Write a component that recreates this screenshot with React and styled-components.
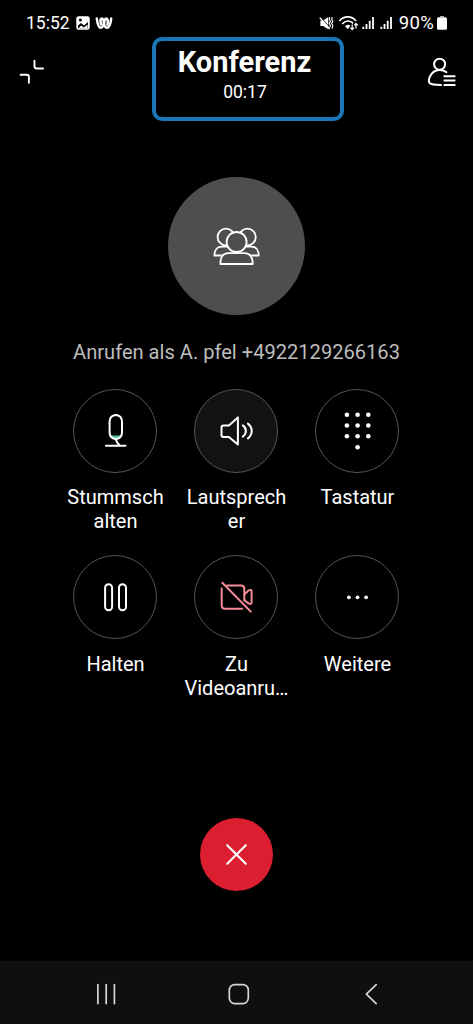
import React from 'react';
import styled, { createGlobalStyle } from 'styled-components';

const colors = {
  black: '#000000',
  white: '#ffffff',
  navBar: '#0f0f0f',
  navIcon: '#d6d6d6',
  avatar: '#4e4e4e',
  ring: '#555555',
  active: '#121212',
  caption: '#bdbdbd',
  frame: '#1b75b9',
  danger: '#dc1f30',
  disabled: '#f58c98',
  level: '#4fc3a5',
};

const actions = [
  { id: 'mute', label: 'Stummsch\nalten', icon: <MicIcon /> },
  { id: 'speaker', label: 'Lautsprech\ner', icon: <SpeakerIcon />, active: true },
  { id: 'keypad', label: 'Tastatur', icon: <KeypadIcon /> },
  { id: 'hold', label: 'Halten', icon: <PauseIcon /> },
  { id: 'video', label: 'Zu\nVideoanru…', icon: <VideoOffIcon /> },
  { id: 'more', label: 'Weitere', icon: <MoreIcon /> },
];

export default function App() {
  return (
    <>
      <GlobalStyle />
      <Screen>
        <StatusBar>
          <StatusGroup>
            <StatusText>15:52</StatusText>
            <PictureIcon />
            <WebexIcon />
          </StatusGroup>
          <StatusIcons />
          <StatusText $wide>90%</StatusText>
          <BatteryIcon />
        </StatusBar>

        <Header>
          <IconButton aria-label="Minimieren">
            <MinimizeIcon />
          </IconButton>
          <TitleFrame>
            <Title>Konferenz</Title>
            <Duration>00:17</Duration>
          </TitleFrame>
          <IconButton $end aria-label="Teilnehmer">
            <ParticipantsIcon />
          </IconButton>
        </Header>

        <Main>
          <Avatar>
            <GroupIcon />
          </Avatar>
          <Caption>Anrufen als A. pfel +4922129266163</Caption>
          <ActionGrid>
            {actions.map(action => (
              <Action key={action.id}>
                <ActionButton $active={action.active}>{action.icon}</ActionButton>
                <ActionLabel>{action.label}</ActionLabel>
              </Action>
            ))}
          </ActionGrid>
          <HangUpButton aria-label="Auflegen">
            <Stroke width="25" height="25" viewBox="0 0 25 25" strokeWidth="2.1">
              <path d="M3.2 3.2 21.8 21.8M21.8 3.2 3.2 21.8" />
            </Stroke>
          </HangUpButton>
        </Main>

        <NavBar>
          <NavIcon viewBox="0 0 24 24">
            <path d="M3.9 2.7V21.6M12.2 2.7V21.6M20.4 2.7V21.6" />
          </NavIcon>
          <NavIcon viewBox="0 0 24 24">
            <rect x="2.3" y="2.6" width="19" height="19" rx="5.5" />
          </NavIcon>
          <NavIcon viewBox="0 0 24 24">
            <path d="M17.2 2.7 7.4 12.2 17.2 21.6" />
          </NavIcon>
        </NavBar>
      </Screen>
    </>
  );
}

function PictureIcon() {
  return (
    <svg width="14" height="14" viewBox="0 0 14 14">
      <rect x="0.3" y="0.3" width="13.4" height="13.4" rx="2.2" fill="#fff" />
      <path d="M2 9.6 5 7 8 9.6 12 6V11.6Q12 12.2 11.4 12.2H2.6Q2 12.2 2 11.6Z" fill="#000" />
      <path d="M2.6 12.2 5 9.4 8 11.6 11.6 8.6V12.2Z" fill="#fff" />
      <circle cx="4.4" cy="4" r="1.5" fill="#000" />
    </svg>
  );
}

function WebexIcon() {
  return (
    <svg width="18" height="14" viewBox="0 0 18 14" fill="none" stroke="#fff" strokeWidth="2.5" strokeLinecap="round">
      <path d="M1.8 2.6C2.4 7.6 3.6 11.8 5.8 11.8S9.2 7.4 9.4 5.2 11 2 12 3 13 6.4 12.4 8.6" />
      <path d="M16.2 2.6C15.6 7.6 14.2 11.8 12 11.8S8.8 7.4 8.6 5.2 7 2 6 3 5.4 6.2 6 8.4" />
    </svg>
  );
}

// Mute, Wi-Fi and the two SIM levels
function StatusIcons() {
  return (
    <svg width="76" height="18" viewBox="0 0 76 18" fill="none" stroke="#fff">
      <path d="M1.4 6.6H4.2L9.2 3V15.2L4.2 12H1.4Z" fill="#fff" stroke="none" />
      <path d="M1.8 2.8 11.4 14.2" stroke="#000" strokeWidth="0.8" />
      <path d="M.8 3.6 10.6 15" strokeWidth="1.4" />
      <path d="M10.8 3.2 10.2 5.3 11.4 7.4 10.2 9.4 11.4 11.5 10.5 13.4M13.3 3.2 12.6 5.3 13.8 7.4 12.6 9.4 13.8 11.5 13 14.6" strokeWidth="1.1" />
      <path d="M20.4 7C25 1.6 32.6 1.6 37 7M23.2 10C26.4 6.1 31.2 6.1 34.2 9.4" strokeWidth="1.7" />
      <path d="M26 12.3C27.6 10.2 30 10.2 31.4 11.8L28.8 15.3Z" fill="#fff" stroke="none" />
      <path d="M33.2 10.4V15.4M31.4 13.7 33.2 15.6 35 13.7M37 14.6V9.7M35.3 11.4 37 9.5 38.7 11.4" strokeWidth="1.2" />
      <path d="M44.3 12.7V15M47.5 10V15M50.7 6.8V15M54 3V15" strokeWidth="1.8" />
      <path d="M62.3 12.7V15M65.5 10V15M68.7 6.8V15M72 3V15" strokeWidth="1.8" />
    </svg>
  );
}

function BatteryIcon() {
  return (
    <svg width="10" height="14" viewBox="0 0 10 14" fill="#fff">
      <path d="M3 0H7V1H3Z" opacity="0.7" />
      <rect y="1.2" width="10" height="12.6" rx="1.6" />
    </svg>
  );
}

function MinimizeIcon() {
  return (
    <Stroke width="26" height="26" viewBox="0 0 26 26" strokeWidth="1.9">
      <path d="M15.5 1.8V7.2Q15.5 9.5 17.8 9.5H24" />
      <path d="M1.6 15.7H7.8Q9.9 15.7 9.9 17.8V23.8" />
    </Stroke>
  );
}

function ParticipantsIcon() {
  return (
    <Stroke width="30" height="30" viewBox="0 0 30 30" strokeWidth="2">
      <circle cx="12.6" cy="7.2" r="5.5" />
      <path d="M19.4 15.2C15 11.8 8.2 12.3 4.6 16.8 2 20.2 1 24.4 2.6 26 4.2 27.6 9 27.9 14 27.9" />
      <path d="M16.6 19.3H28.4M16.6 23.6H28.4M16.6 27.9H28.4" strokeLinecap="butt" />
    </Stroke>
  );
}

function GroupIcon() {
  return (
    <Stroke width="49" height="40" viewBox="0 0 49 40" strokeWidth="1.8" fill={colors.avatar}>
      <circle cx="14" cy="11" r="8.4" />
      <circle cx="35.4" cy="11" r="8.4" />
      <path d="M2.4 29.5C2.4 24.5 4.8 20.6 9.7 20.6H39.4C44.2 20.6 46.7 24.5 46.7 29.5Z" />
      <path d="M8.2 39V33C8.8 28.5 12.2 26.5 16.2 26.5H32.8C36.8 26.5 40.3 28.5 40.9 33V39Z" stroke="none" />
      <path d="M8.4 38C8.4 30.5 11.2 27.2 16.7 27.2H32.4C37.9 27.2 40.7 30.5 40.7 38Z" />
      <circle cx="24.6" cy="16" r="10" />
    </Stroke>
  );
}

function MicIcon() {
  return (
    <Stroke {...actionIcon}>
      <path d="M15.4 24.6H25.2Q23.5 27.6 20.3 27.6T15.4 24.6Z" fill={colors.level} stroke="none" />
      <rect x="14.1" y="4" width="12.4" height="24" rx="6.2" />
      <path d="M20.2 28.2Q21.2 31.8 24.2 34.4M10.4 34.8H30" />
    </Stroke>
  );
}

function SpeakerIcon() {
  return (
    <Stroke {...actionIcon}>
      <path d="M7 14.4H12.4L21.4 6.4V33.6L12.4 26H7Q5 26 5 24V16.4Q5 14.4 7 14.4Z" />
      <path d="M26.3 14.4Q29.4 16.6 29.4 20T26.3 25.6M31.4 12.6Q35.2 15.6 35.2 20T31.4 27.4" />
    </Stroke>
  );
}

function KeypadIcon() {
  const rows = [3.7, 14.5, 25.3];
  const columns = [9.4, 20.1, 30.8];

  return (
    <Dots>
      {rows.map(y => columns.map(x => <circle key={`${x}-${y}`} cx={x} cy={y} r="2.3" />))}
      <circle cx="20.1" cy="36.3" r="2.3" />
    </Dots>
  );
}

function PauseIcon() {
  return (
    <Stroke {...actionIcon}>
      <rect x="9.6" y="7.2" width="7" height="26" rx="3.5" />
      <rect x="23.5" y="7.2" width="7" height="26" rx="3.5" />
    </Stroke>
  );
}

function VideoOffIcon() {
  return (
    <Stroke {...actionIcon} stroke={colors.disabled}>
      <path d="M5.8 5.8 34.3 34.6" />
      <path d="M5.2 11.4V28.2Q5.2 31.7 8.7 31.7H25.6" />
      <path d="M10.6 8.6H24.4Q27.8 8.6 27.8 12V23.6" />
      <path d="M28 17.2 32 13.4Q35.1 12 35.1 14.4V25.4Q35.1 27.8 32 26.4L28 23.2" />
    </Stroke>
  );
}

function MoreIcon() {
  return (
    <Dots>
      <circle cx="11.4" cy="20.3" r="1.9" />
      <circle cx="20" cy="20.3" r="1.9" />
      <circle cx="28.6" cy="20.3" r="1.9" />
    </Dots>
  );
}

const GlobalStyle = createGlobalStyle`
  * {
    box-sizing: border-box;
  }

  body {
    margin: 0;
    background: ${colors.black};
    font-family: Roboto, 'Liberation Sans', sans-serif;
  }

  svg {
    display: block;
    flex-shrink: 0;
  }

  button {
    padding: 0;
    border: none;
    background: none;
    cursor: pointer;
  }
`;

const Stroke = styled.svg.attrs(props => ({
  fill: props.fill || 'none',
  stroke: props.stroke || colors.white,
  strokeLinecap: 'round',
  strokeLinejoin: 'round',
}))``;

const Dots = styled.svg.attrs({
  width: 40,
  height: 40,
  viewBox: '-0.5 0 40 40',
  fill: colors.white,
})``;

const actionIcon = {
  width: 40,
  height: 40,
  viewBox: '-0.5 0 40 40',
  strokeWidth: 2,
};

const Screen = styled.div`
  width: 473px;
  height: 1024px;
  display: flex;
  flex-direction: column;
  background: ${colors.black};
  color: ${colors.white};
  overflow: hidden;
`;

const StatusBar = styled.div`
  height: 37px;
  padding: 8px 26px 0 26px;
  display: flex;
  align-items: center;
  gap: 3px;
`;

const StatusGroup = styled.div`
  flex: 1;
  display: flex;
  align-items: center;
  gap: 5px;

  span {
    margin-right: 1px;
  }
`;

const StatusText = styled.span`
  font-size: ${props => (props.$wide ? '18.5px' : '17.5px')};
  line-height: 20px;
  letter-spacing: ${props => (props.$wide ? '0.3px' : 'normal')};
  margin-left: ${props => (props.$wide ? '1px' : 0)};
`;

const Header = styled.header`
  height: 84px;
  display: grid;
  grid-template-columns: 152px 192px 129px;
`;

const IconButton = styled.button`
  justify-self: ${props => (props.$end ? 'end' : 'start')};
  align-self: start;
  margin: ${props => (props.$end ? '20px 16px 0 0' : '22px 0 0 19px')};
`;

const TitleFrame = styled.div`
  border: 4px solid ${colors.frame};
  border-radius: 10px;
  padding-top: 4px;
  display: flex;
  flex-direction: column;
  align-items: center;
`;

const Title = styled.h1`
  margin: 0;
  padding-right: 7px;
  font-size: 29px;
  font-weight: 700;
  line-height: 34px;
`;

const Duration = styled.div`
  padding-right: 6px;
  margin-top: 2px;
  font-size: 17.5px;
  line-height: 22px;
`;

const Main = styled.main`
  flex: 1;
  display: flex;
  flex-direction: column;
  align-items: center;
  padding-top: 56px;
`;

const Avatar = styled.div`
  width: 137px;
  height: 138px;
  border-radius: 50%;
  background: ${colors.avatar};
  display: flex;
  align-items: center;
  justify-content: center;
`;

const Caption = styled.div`
  margin-top: 25px;
  color: ${colors.caption};
  font-size: 20.1px;
  line-height: 24px;
`;

const ActionGrid = styled.div`
  margin: 24.5px 1px 0 0;
  display: grid;
  grid-template-columns: repeat(3, 121px);
  grid-auto-rows: 166.3px;
`;

const Action = styled.div`
  display: flex;
  flex-direction: column;
  align-items: center;
`;

const ActionButton = styled.button`
  width: 84px;
  height: 84px;
  border: 1.4px solid ${colors.ring};
  border-radius: 50%;
  background: ${props => (props.$active ? colors.active : 'transparent')};
  display: flex;
  align-items: center;
  justify-content: center;
`;

const ActionLabel = styled.div`
  margin-top: 12.9px;
  padding-left: 1px;
  font-size: 20px;
  line-height: 24px;
  text-align: center;
  white-space: pre-line;
`;

const HangUpButton = styled.button`
  width: 73px;
  height: 73px;
  margin-top: 97px;
  border-radius: 50%;
  background: ${colors.danger};
  display: flex;
  align-items: center;
  justify-content: center;
`;

const NavBar = styled.nav`
  height: 63px;
  padding: 3px 90px 0 94px;
  background: ${colors.navBar};
  display: flex;
  align-items: center;
  justify-content: space-between;
`;

const NavIcon = styled.svg`
  width: 24px;
  height: 24px;
  fill: none;
  stroke: ${colors.navIcon};
  stroke-width: 1.7px;
  stroke-linecap: round;
  stroke-linejoin: round;
`;
